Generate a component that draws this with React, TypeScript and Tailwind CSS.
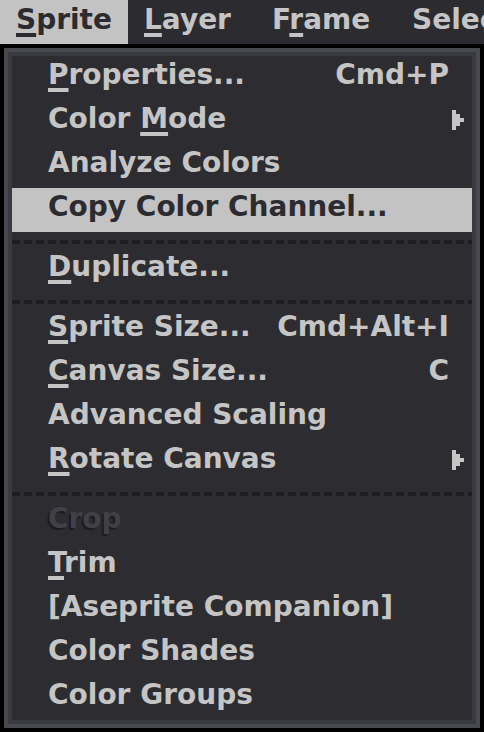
import React from "react";

type Item =
  | { sep: true }
  | {
      sep?: false;
      label: string;
      mn?: number;
      shortcut?: string;
      sub?: boolean;
      active?: boolean;
      disabled?: boolean;
    };

const items: Item[] = [
  { label: "Properties...", mn: 0, shortcut: "Cmd+P" },
  { label: "Color Mode", mn: 6, sub: true },
  { label: "Analyze Colors" },
  { label: "Copy Color Channel...", active: true },
  { sep: true },
  { label: "Duplicate...", mn: 0 },
  { sep: true },
  { label: "Sprite Size...", mn: 0, shortcut: "Cmd+Alt+I" },
  { label: "Canvas Size...", mn: 0, shortcut: "C" },
  { label: "Advanced Scaling" },
  { label: "Rotate Canvas", mn: 0, sub: true },
  { sep: true },
  { label: "Crop", disabled: true },
  { label: "Trim", mn: 0 },
  { label: "[Aseprite Companion]" },
  { label: "Color Shades" },
  { label: "Color Groups" },
];

const menus = [
  { label: "Sprite", mn: 0, open: true, w: "w-[128px]" },
  { label: "Layer", mn: 0, w: "w-[128px]" },
  { label: "Frame", mn: 1, w: "w-[140px]" },
  { label: "Select", w: "" },
];

function Label({ text, mn }: { text: string; mn?: number }) {
  if (mn === undefined) return <>{text}</>;
  return (
    <>
      {text.slice(0, mn)}
      <span className="underline decoration-[4px] underline-offset-[4px]">
        {text[mn]}
      </span>
      {text.slice(mn + 1)}
    </>
  );
}

function Arrow() {
  return (
    <svg width="12" height="20" viewBox="0 0 12 20" className="block">
      <path
        d="M0 0H4V4H8V8H12V12H8V16H4V20H0Z"
        fill="currentColor"
        shapeRendering="crispEdges"
      />
    </svg>
  );
}

export default function App() {
  return (
    <div className="w-[484px] h-[732px] bg-black overflow-hidden font-['DejaVu_Sans',sans-serif] font-bold text-[28px] text-[#c5c5c5]">
      <div className="h-[44px] bg-[#2b2b30] flex whitespace-nowrap overflow-hidden leading-[40px]">
        {menus.map((m) => (
          <div
            key={m.label}
            className={
              "h-full pl-4 shrink-0 " +
              m.w +
              (m.open ? " bg-[#c3c3c3] text-[#2b2b30]" : "")
            }
          >
            <Label text={m.label} mn={m.mn} />
          </div>
        ))}
      </div>

      <div className="h-[688px] border-4 border-black">
        <div className="h-full border-4 border-[#48484f]">
          <div className="h-full border-4 border-[#3a3a41] bg-[#2c2c31] flex flex-col">
            {items.map((it, i) =>
              it.sep ? (
                <div key={i} className="h-[16px] pt-[8px]">
                  <div className="h-[4px] bg-[repeating-linear-gradient(90deg,#1e1e22_0_8px,transparent_8px_12px)]" />
                </div>
              ) : (
                <div
                  key={i}
                  className={
                    "h-[44px] flex items-start leading-[38px] pl-[36px] pr-[8px] whitespace-nowrap " +
                    (it.active ? "bg-[#c3c3c3] text-[#2b2b30]" : "")
                  }
                >
                  <span
                    className={
                      "flex-1 " +
                      (it.disabled
                        ? "text-[#404047] [text-shadow:-2px_2px_0_#1c1c20]"
                        : "")
                    }
                  >
                    <Label text={it.label} mn={it.mn} />
                  </span>
                  {it.shortcut && <span>{it.shortcut}</span>}
                  <div className="w-[15px] h-[38px] flex items-center justify-end pt-[2px]">
                    {it.sub && <Arrow />}
                  </div>
                </div>
              )
            )}
          </div>
        </div>
      </div>
    </div>
  );
}
